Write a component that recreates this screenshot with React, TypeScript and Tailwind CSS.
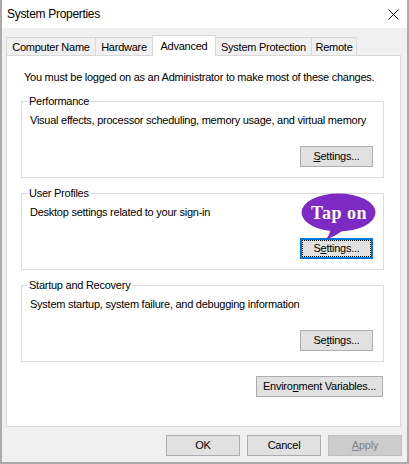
import type { ReactNode } from "react"

const tabs = [
  { label: "Computer Name", w: "w-[90px]" },
  { label: "Hardware", w: "w-[58px]" },
  { label: "Advanced", w: "w-[64px]", active: true },
  { label: "System Protection", w: "w-[97px]" },
  { label: "Remote", w: "w-[46px]" },
]

const WinButton = ({
  children,
  className = "",
  focused = false,
  disabled = false,
}: {
  children: ReactNode
  className?: string
  focused?: boolean
  disabled?: boolean
}) => {
  if (focused) {
    return (
      <button className={`h-[21px] border-2 border-[#0078d7] bg-[#e1e1e1] ${className}`}>
        <span className="flex h-full w-full items-center justify-center border border-dotted border-black">
          {children}
        </span>
      </button>
    )
  }
  return (
    <button
      className={`flex h-[21px] items-center justify-center border ${
        disabled
          ? "border-[#bfbfbf] bg-[#cccccc] text-[#838383]"
          : "border-[#adadad] bg-[#e1e1e1] text-black"
      } ${className}`}
    >
      {children}
    </button>
  )
}

const Group = ({
  title,
  text,
  children,
}: {
  title: string
  text: string
  children: ReactNode
}) => (
  <fieldset className="relative w-[363px] border border-[#dcdcdc] p-0">
    <legend className="ml-[5px] px-[2px] leading-[14px]">{title}</legend>
    <div className="pl-[8px] pr-[10px] pb-[10px]">
      <p className="mt-[5px] leading-[15px]">{text}</p>
      <div className="mt-[18px] flex justify-end">{children}</div>
    </div>
  </fieldset>
)

export default function App() {
  return (
    <div className="flex h-[464px] w-[409px] flex-col border-x-2 border-b-2 border-[#ababab] bg-[#f0f0f0] font-['Liberation_Sans',Arial,sans-serif] text-[11px] tracking-[-0.25px] text-black">
      {/* Title bar */}
      <div className="flex h-[28px] shrink-0 items-center justify-between bg-white pl-[5px] pr-[8px]">
        <span className="text-[12px] tracking-[-0.3px]">System Properties</span>
        <svg width="11" height="11" viewBox="0 0 11 11" className="mt-[1px]">
          <path d="M0.5 0.5 L10.5 10.5 M10.5 0.5 L0.5 10.5" stroke="#000" strokeWidth="1" />
        </svg>
      </div>

      <div className="flex flex-col pl-[4px] pt-[7px]">
        {/* Tabs */}
        <div className="flex h-[21px] items-end">
          {tabs.map((t, i) =>
            t.active ? (
              <div
                key={t.label}
                className={`relative z-10 flex h-[21px] items-start justify-center border-x border-t border-[#d9d9d9] bg-white pt-[2px] ${t.w} ${i > 0 ? "-ml-px" : ""}`}
              >
                {t.label}
              </div>
            ) : (
              <div
                key={t.label}
                className={`mb-px flex h-[18px] items-center justify-center border-x border-t border-[#d9d9d9] bg-[#f0f0f0] pt-[1px] ${t.w} ${i > 0 ? "-ml-px" : ""}`}
              >
                {t.label}
              </div>
            )
          )}
        </div>

        {/* Panel */}
        <div className="-mt-px flex h-[372px] w-[395px] flex-col border border-[#d9d9d9] bg-white pl-[14px] pt-[14px]">
          <p className="pl-[3px] leading-[15px]">
            You must be logged on as an Administrator to make most of these changes.
          </p>

          <div className="mt-[9px] flex flex-col gap-[8px]">
            <Group
              title="Performance"
              text="Visual effects, processor scheduling, memory usage, and virtual memory"
            >
              <WinButton className="w-[73px]">
                <span><u>S</u>ettings...</span>
              </WinButton>
            </Group>

            <Group title="User Profiles" text="Desktop settings related to your sign-in">
              <WinButton focused className="w-[73px]">
                <span>S<u>e</u>ttings...</span>
              </WinButton>
              {/* Callout bubble */}
              <svg
                width="78"
                height="50"
                viewBox="0 0 78 50"
                className="absolute -top-[7px] left-[279px]"
              >
                <ellipse cx="37.5" cy="19.5" rx="37" ry="19" fill="#7d2ac4" />
                <path d="M29 34 Q30 42 24 47 Q37 42 45 35 Z" fill="#7d2ac4" />
                <text
                  x="38"
                  y="26"
                  textAnchor="middle"
                  fill="#ffffff"
                  fontFamily="'Liberation Serif', 'Times New Roman', serif"
                  fontWeight="bold"
                  fontSize="18"
                  letterSpacing="0.5"
                >
                  Tap on
                </text>
              </svg>
            </Group>

            <Group
              title="Startup and Recovery"
              text="System startup, system failure, and debugging information"
            >
              <WinButton className="w-[73px]">
                <span>Se<u>t</u>tings...</span>
              </WinButton>
            </Group>
          </div>

          <div className="mt-[14px] flex w-[362px] justify-end">
            <WinButton className="w-[127px]">
              <span>Enviro<u>n</u>ment Variables...</span>
            </WinButton>
          </div>
        </div>

        {/* Dialog buttons */}
        <div className="mt-[8px] flex justify-end gap-[7px] pr-[5px]">
          <WinButton className="w-[74px]">OK</WinButton>
          <WinButton className="w-[74px]">Cancel</WinButton>
          <WinButton disabled className="w-[74px]">
            <span><u>A</u>pply</span>
          </WinButton>
        </div>
      </div>
    </div>
  )
}
